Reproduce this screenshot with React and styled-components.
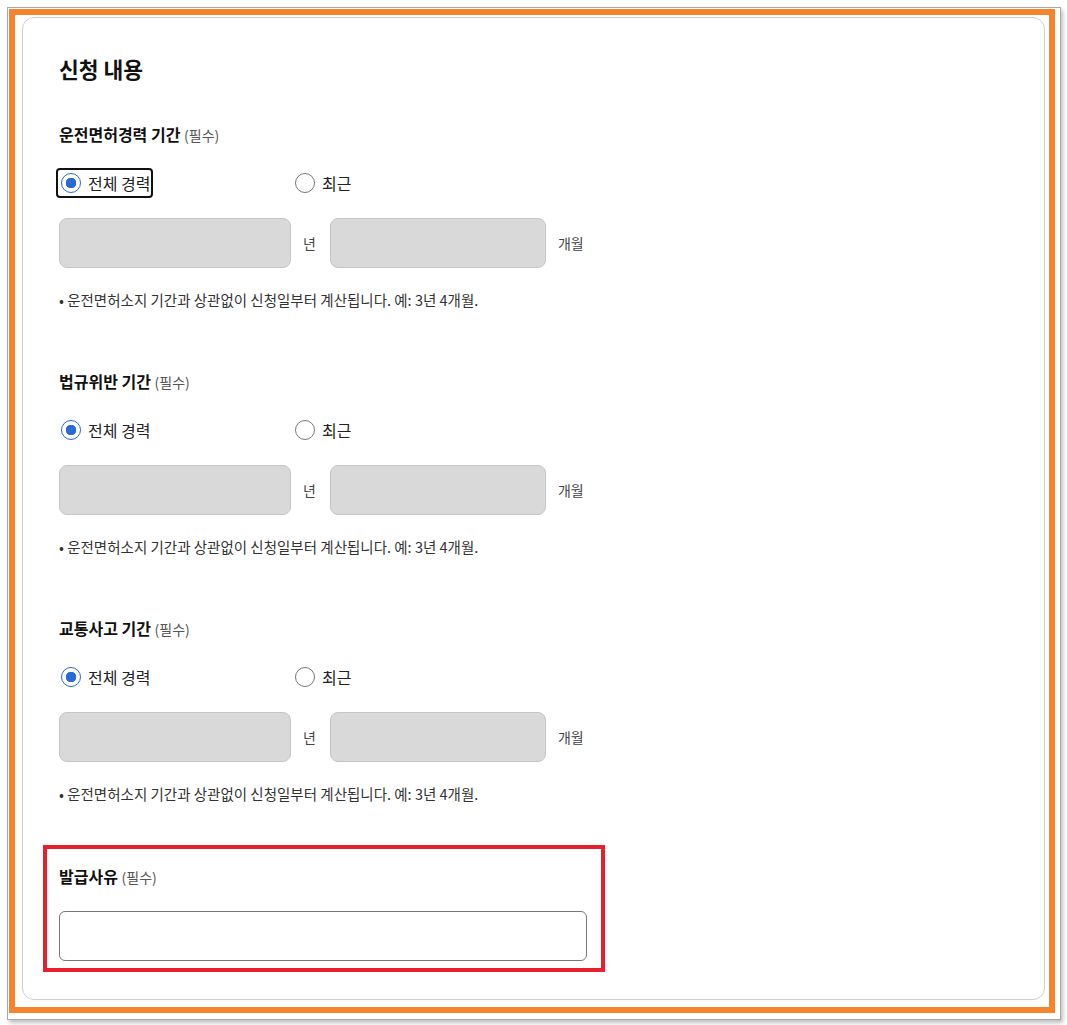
import React from 'react'
import styled, { createGlobalStyle } from 'styled-components'

const GlobalStyle = createGlobalStyle`
  html, body {
    margin: 0;
    padding: 0;
    background: #ffffff;
  }
  body {
    font-family: "Noto Sans CJK KR", "Noto Sans", sans-serif;
    color: #111;
  }
`

const sections = [
  { title: '운전면허경력 기간', focused: true },
  { title: '법규위반 기간' },
  { title: '교통사고 기간' },
]

const Period = ({ title, focused }) => (
  <Section>
    <Label>
      {title} <Required>(필수)</Required>
    </Label>
    <RadioRow>
      <RadioItem $focused={focused}>
        <RadioDot $checked />
        전체 경력
      </RadioItem>
      <RadioItem>
        <RadioDot />
        최근
      </RadioItem>
    </RadioRow>
    <InputRow>
      <GrayInput $width={232} />
      <Unit>년</Unit>
      <GrayInput $width={216} />
      <Unit>개월</Unit>
    </InputRow>
    <Help>• 운전면허소지 기간과 상관없이 신청일부터 계산됩니다. 예: 3년 4개월.</Help>
  </Section>
)

const App = () => {
  return (
    <Page>
      <GlobalStyle />
      <Frame>
        <Highlight>
          <Card>
            <Title>신청 내용</Title>
            {sections.map((s) => (
              <Period key={s.title} {...s} />
            ))}
            <ReasonBox>
              <Label>
                발급사유 <Required>(필수)</Required>
              </Label>
              <TextInput />
            </ReasonBox>
          </Card>
        </Highlight>
      </Frame>
    </Page>
  )
}

export default App

const Page = styled.div`
  padding: 7px 6px 5px 7px;
`
const Frame = styled.div`
  width: 1054px;
  height: 1013px;
  box-sizing: border-box;
  border: 1px solid #a9a9a9;
  box-shadow: 2px 3px 4px rgba(0, 0, 0, 0.25);
  padding: 1px 5px 6px 1px;
  background: #fff;
`
const Highlight = styled.div`
  height: 100%;
  box-sizing: border-box;
  border: 6px solid #f5842c;
  padding: 2px 4px 7px 7px;
`
const Card = styled.div`
  height: 100%;
  box-sizing: border-box;
  border: 1px solid #cfcfcf;
  border-radius: 12px;
  padding: 34px 36px 0 36px;
`
const Title = styled.h2`
  margin: 0 0 37px;
  font-size: 21.5px;
  font-weight: 700;
  line-height: 34px;
  color: #111;
`
const Section = styled.div`
  margin-bottom: 60px;
`
const Label = styled.div`
  font-size: 16px;
  font-weight: 700;
  line-height: 22px;
  color: #111;
`
const Required = styled.span`
  font-size: 14px;
  font-weight: 400;
  color: #555;
`
const RadioRow = styled.div`
  display: flex;
  margin-top: 22px;
  height: 30px;
`
const RadioItem = styled.div`
  display: flex;
  align-items: center;
  gap: 7px;
  width: 237px;
  box-sizing: border-box;
  margin-left: -3px;
  padding-left: 3px;
  font-size: 16px;
  white-space: nowrap;
  color: #222;
  border: 2px solid transparent;
  border-radius: 4px;
  ${(p) =>
    p.$focused &&
    `
    width: 97px;
    border-color: #111;
    margin-right: 140px;
  `}
`
const RadioDot = styled.span`
  width: 20px;
  height: 20px;
  box-sizing: border-box;
  border-radius: 50%;
  flex-shrink: 0;
  border: 1.5px solid ${(p) => (p.$checked ? '#2a6ad4' : '#777')};
  background: ${(p) =>
    p.$checked ? 'radial-gradient(circle, #2a6ad4 0 5px, #fff 5.5px)' : '#fff'};
`
const InputRow = styled.div`
  display: flex;
  align-items: center;
  margin-top: 20px;
`
const GrayInput = styled.div`
  width: ${(p) => p.$width}px;
  height: 50px;
  box-sizing: border-box;
  background: #d9d9d9;
  border: 1px solid #c6c6c6;
  border-radius: 8px;
`
const Unit = styled.span`
  font-size: 14px;
  color: #444;
  margin: 0 14px 0 12px;
`
const Help = styled.p`
  margin: 22px 0 0;
  font-size: 14.5px;
  line-height: 20px;
  color: #333;
`
const ReasonBox = styled.div`
  width: 562px;
  box-sizing: border-box;
  margin: -19px 0 0 -16px;
  border: 4px solid #e6212d;
  padding: 16px 14px 7px 12px;
`
const TextInput = styled.div`
  margin-top: 23px;
  height: 50px;
  box-sizing: border-box;
  border: 1px solid #777;
  border-radius: 6px;
  background: #fff;
`
